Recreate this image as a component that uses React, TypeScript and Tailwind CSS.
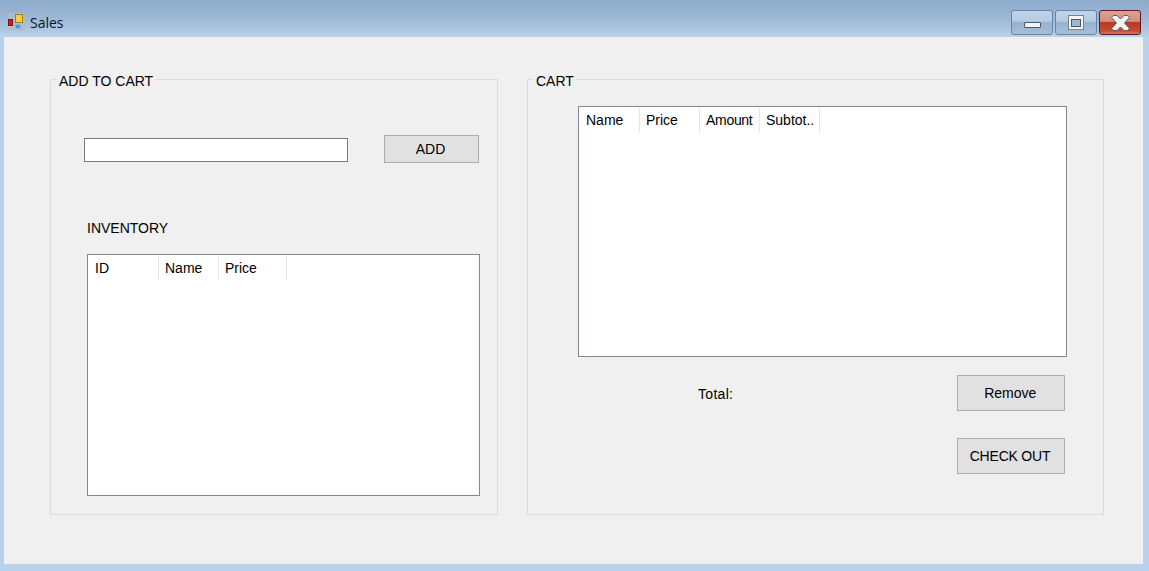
const font = { fontFamily: '"Liberation Sans", Arial, sans-serif' };

function Column({ label, width, first, tracking }: { label: string; width: string; first?: boolean; tracking?: string }) {
  return (
    <div className={`${width} ${first ? 'pl-[7px]' : 'pl-[6px]'} ${tracking ?? ''} h-6 mt-px border-r border-[#e5e5e5] pt-[4px] text-[14px] leading-4 text-black whitespace-nowrap overflow-hidden`}>
      {label}
    </div>
  );
}

function Win7Button({ kind }: { kind: 'min' | 'max' | 'close' }) {
  const base = 'w-[42px] h-[25px] rounded-[3px] border flex items-center justify-center';
  if (kind === 'close') {
    return (
      <div className={`${base} border-[#5d1a26] bg-[linear-gradient(#e0a093_0%,#d58d7f_45%,#b93a22_50%,#c14a30_85%,#d07a60_100%)]`}>
        <svg width="19" height="16" viewBox="0 0 19 16">
          <path d="M0.5 2.5 L2.5 0.5 H6 L9.5 4 L13 0.5 H16.5 L18.5 2.5 L13.5 8 L18.5 13.5 L16.5 15.5 H13 L9.5 12 L6 15.5 H2.5 L0.5 13.5 L5.5 8 Z" fill="#f2f2f2" stroke="#5a5f6a" strokeWidth="1" />
        </svg>
      </div>
    );
  }
  return (
    <div className={`${base} border-[#6b83a3] bg-[linear-gradient(#c0d5ea_0%,#b5cbe3_45%,#98b2cf_50%,#a5bfda_100%)]`}>
      {kind === 'min' ? (
        <div className="w-[17px] h-[6px] mt-[5px] bg-[#f4f4f4] border border-[#4d5668] rounded-[1px]" />
      ) : (
        <div className="w-[16px] h-[15px] bg-[#f4f4f4] border border-[#7a8494] flex items-center justify-center">
          <div className="w-[10px] h-[8px] bg-[#9db6d2] border border-[#4d5668]" />
        </div>
      )}
    </div>
  );
}

function Button({ label, className }: { label: string; className: string }) {
  return (
    <div className={`${className} flex items-center justify-center pr-[2px] bg-[#e1e1e1] border border-[#adadad] text-[14px] text-black whitespace-nowrap`}>
      {label}
    </div>
  );
}

function Legend({ label }: { label: string }) {
  return (
    <span className="absolute left-[6px] -top-[7px] bg-[#f0f0f0] px-[2px] text-[14px] leading-4 text-black">{label}</span>
  );
}

export default function App() {
  return (
    <div style={font} className="w-[1149px] h-[571px] overflow-hidden bg-[#b9d1ea] flex flex-col">
      <div className="h-[37px] shrink-0 flex items-start bg-[linear-gradient(#8daacb_0%,#a0bad8_55%,#b9d1ea_100%)]">
        <svg className="ml-[7px] mt-[13px]" width="18" height="18" viewBox="0 0 18 18">
          <rect x="0" y="0" width="18" height="18" fill="#b4bcc6" opacity="0.7" />
          <rect x="1.5" y="6.5" width="4" height="6" fill="#c0261c" stroke="#7a1512" strokeWidth="1" />
          <rect x="8.5" y="1.5" width="7" height="8" fill="#f7cb48" stroke="#a67a10" strokeWidth="1" />
          <rect x="8.5" y="11.5" width="5" height="4" fill="#5c94e0" stroke="#8db4e8" strokeWidth="1" />
        </svg>
        <span style={{ fontFamily: '"Open Sans", "Noto Sans", sans-serif' }} className="ml-[5px] mt-[13px] text-[14px] leading-5 text-[#0a1420]">Sales</span>
        <div className="ml-auto mr-[8px] mt-[10px] flex gap-[2px]">
          <Win7Button kind="min" />
          <Win7Button kind="max" />
          <Win7Button kind="close" />
        </div>
      </div>
      <div className="ml-1 mr-[6px] h-[527px] bg-[#f0f0f0] flex items-start pt-[42px] pl-[46px] gap-[29px]">
        <div className="relative w-[448px] h-[436px] border border-[#dcdcdc]">
          <Legend label="ADD TO CART" />
          <div className="flex items-start pl-[33px] pt-[55px]">
            <div className="w-[264px] h-6 mt-[3px] bg-white border border-[#7a7a7a]" />
            <Button label="ADD" className="ml-[36px] w-[95px] h-7" />
          </div>
          <div className="ml-[36px] mt-[57px] text-[14px] leading-4 text-black">INVENTORY</div>
          <div className="ml-[36px] mt-[18px] w-[393px] h-[242px] bg-white border border-[#828790] flex items-start">
            <Column label="ID" width="w-[71px]" first />
            <Column label="Name" width="w-[60px]" />
            <Column label="Price" width="w-[68px]" />
          </div>
        </div>
        <div className="relative w-[577px] h-[436px] border border-[#dcdcdc]">
          <Legend label="CART" />
          <div className="ml-[50px] mt-[26px] w-[489px] h-[251px] bg-white border border-[#828790] flex items-start">
            <Column label="Name" width="w-[61px]" first />
            <Column label="Price" width="w-[60px]" />
            <Column label="Amount" width="w-[60px]" tracking="tracking-[-0.3px]" />
            <Column label="Subtot.." width="w-[60px]" />
          </div>
          <div className="flex items-start mt-[18px]">
            <div className="ml-[170px] mt-[11px] text-[14px] leading-4 tracking-[0.3px] text-black">Total:</div>
            <Button label="Remove" className="ml-[224px] w-[108px] h-9" />
          </div>
          <Button label="CHECK OUT" className="ml-[429px] mt-[27px] w-[108px] h-9 tracking-[-0.2px]" />
        </div>
      </div>
    </div>
  );
}
